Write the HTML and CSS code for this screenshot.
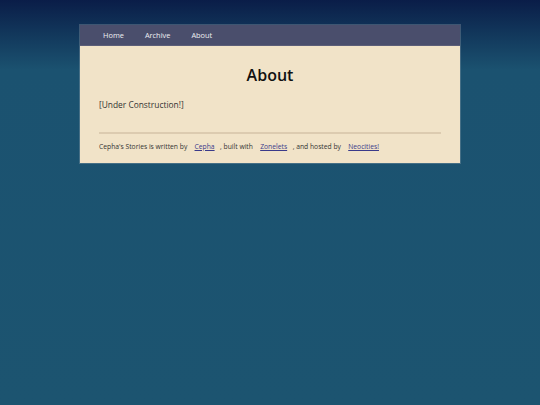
FILE: index.html
```html
<!DOCTYPE html>
<html>
<head>
<meta charset="utf-8">
<link rel="stylesheet" href="styles.css">
</head>
<body>
<div class="page">
  <nav class="nav">
    <a href="#">Home</a>
    <a href="#">Archive</a>
    <a href="#">About</a>
  </nav>
  <main class="content">
    <h1 class="title">About</h1>
    <p class="text">[Under Construction!]</p>
    <hr class="rule">
    <footer class="footer">Cepha's Stories is written by <a href="#">Cepha</a>, built with <a href="#">Zonelets</a>, and hosted by <a href="#">Neocities!</a></footer>
  </main>
</div>
</body>
</html>
```
FILE: styles.css
```css
html, body { margin: 0; padding: 0; }
body {
  width: 540px;
  height: 405px;
  font-family: "Open Sans", sans-serif;
  background: linear-gradient(to bottom, #0a1d48 0px, #12385c 35px, #1b5270 70px, #1c5470 100%);
  overflow: hidden;
}
.page {
  width: 380px;
  margin: 25px auto 0;
  box-shadow: 0 0 0 1px rgba(200,200,200,0.25);
}
.nav {
  display: flex;
  height: 21px;
  align-items: center;
  padding-left: 23px;
  gap: 21px;
  background: #4a4e6c;
  border-bottom: 1px solid #5c5e78;
  box-sizing: border-box;
}
.nav a {
  color: #eeeef2;
  text-decoration: none;
  font-size: 7.4px;
}
.content {
  background: #f1e3c8;
  padding: 17px 19px 10px;
}
.title {
  margin: 0;
  text-align: center;
  font-size: 16px;
  font-weight: 600;
  line-height: 24px;
  color: #111;
}
.text {
  margin: 11px 0 0;
  font-size: 8.4px;
  line-height: 14px;
  color: #333;
}
.rule {
  margin: 20px 0 0;
  border: 0;
  height: 2px;
  background: #dccbb0;
}
.footer {
  margin-top: 7px;
  font-size: 6.75px;
  line-height: 12px;
  color: #333;
}
.footer a {
  color: #3a3a8a;
  margin: 0 5.5px;
}
```
